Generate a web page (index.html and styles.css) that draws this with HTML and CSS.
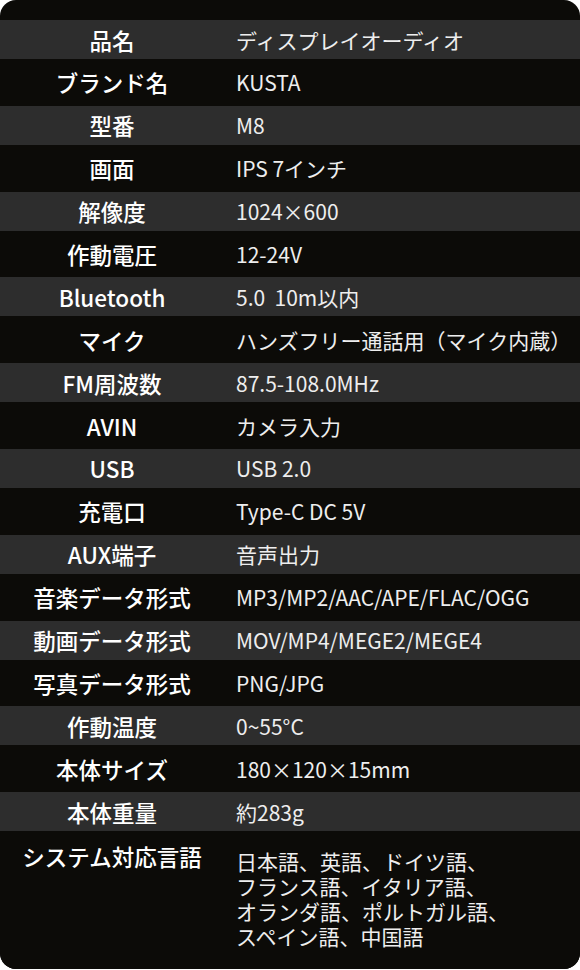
FILE: index.html
```html
<!DOCTYPE html>
<html lang="ja">
<head>
<meta charset="utf-8">
<title>仕様</title>
<link rel="stylesheet" href="styles.css">
</head>
<body>
<div class="spec">
  <div class="row"><div class="label">品名</div><div class="value">ディスプレイオーディオ</div></div>
  <div class="row"><div class="label">ブランド名</div><div class="value">KUSTA</div></div>
  <div class="row"><div class="label">型番</div><div class="value">M8</div></div>
  <div class="row"><div class="label">画面</div><div class="value">IPS 7インチ</div></div>
  <div class="row"><div class="label">解像度</div><div class="value">1024×600</div></div>
  <div class="row"><div class="label">作動電圧</div><div class="value">12-24V</div></div>
  <div class="row"><div class="label">Bluetooth</div><div class="value">5.0&nbsp; 10m以内</div></div>
  <div class="row"><div class="label">マイク</div><div class="value">ハンズフリー通話用（マイク内蔵）</div></div>
  <div class="row"><div class="label">FM周波数</div><div class="value">87.5-108.0MHz</div></div>
  <div class="row"><div class="label">AVIN</div><div class="value">カメラ入力</div></div>
  <div class="row"><div class="label">USB</div><div class="value">USB 2.0</div></div>
  <div class="row"><div class="label">充電口</div><div class="value">Type-C DC 5V</div></div>
  <div class="row"><div class="label">AUX端子</div><div class="value">音声出力</div></div>
  <div class="row"><div class="label">音楽データ形式</div><div class="value">MP3/MP2/AAC/APE/FLAC/OGG</div></div>
  <div class="row"><div class="label">動画データ形式</div><div class="value">MOV/MP4/MEGE2/MEGE4</div></div>
  <div class="row"><div class="label">写真データ形式</div><div class="value">PNG/JPG</div></div>
  <div class="row"><div class="label">作動温度</div><div class="value">0~55°C</div></div>
  <div class="row"><div class="label">本体サイズ</div><div class="value">180×120×15mm</div></div>
  <div class="row"><div class="label">本体重量</div><div class="value">約283g</div></div>
  <div class="row row-last"><div class="label">システム対応言語</div><div class="value value-multi">日本語、英語、ドイツ語、<br>フランス語、イタリア語、<br>オランダ語、ポルトガル語、<br>スペイン語、中国語</div></div>
</div>
</body>
</html>
```

FILE: styles.css
```css
html, body {
  margin: 0;
  padding: 0;
  background: #ffffff;
}

.spec {
  width: 580px;
  height: 969px;
  box-sizing: border-box;
  padding-top: 20px;
  background: #0c0b08;
  border-radius: 16px;
  overflow: hidden;
  display: flex;
  flex-direction: column;
  font-family: "Noto Sans CJK JP", "Noto Sans", sans-serif;
}

.row {
  display: flex;
  align-items: center;
  flex: none;
  height: 46.8px;
  background: #0c0b08;
}

.row:nth-child(odd) {
  height: 39px;
  background: #2d2d2d;
}

.label {
  width: 224px;
  flex: none;
  text-align: center;
  color: #ffffff;
  font-size: 22.5px;
  font-weight: 500;
  line-height: 26px;
}

.value {
  margin-left: 12px;
  color: #eeeeee;
  font-size: 21px;
  font-weight: 400;
  line-height: 26px;
}

.row-last {
  flex: 1;
  align-items: flex-start;
  padding-top: 12px;
}

.value-multi {
  padding-top: 6px;
  line-height: 25px;
}
```
